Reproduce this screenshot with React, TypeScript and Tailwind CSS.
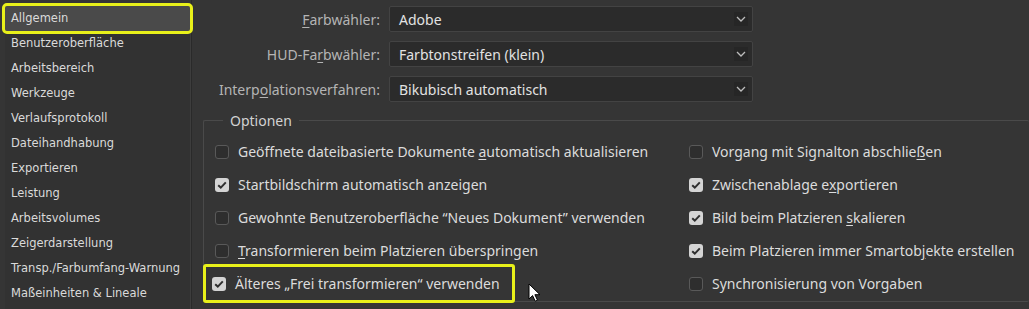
import { ReactNode } from 'react'

const navItems = [
  'Allgemein',
  'Benutzeroberfläche',
  'Arbeitsbereich',
  'Werkzeuge',
  'Verlaufsprotokoll',
  'Dateihandhabung',
  'Exportieren',
  'Leistung',
  'Arbeitsvolumes',
  'Zeigerdarstellung',
  'Transp./Farbumfang-Warnung',
  'Maßeinheiten & Lineale',
]

function U({ children }: { children: ReactNode }) {
  return <span className="underline underline-offset-2 decoration-1">{children}</span>
}

function Chevron() {
  return (
    <svg width="10" height="6" viewBox="0 0 10 6" className="text-[#bdbdbd]">
      <path d="M1 1l4 4 4-4" fill="none" stroke="currentColor" strokeWidth="1.3" />
    </svg>
  )
}

function SelectRow({ label, value }: { label: ReactNode; value: string }) {
  return (
    <div className="flex items-center h-[26px]">
      <div className="w-[197px] text-right pr-[9px] text-[14px] text-[#b4b4b4] whitespace-nowrap">{label}</div>
      <div className="w-[364px] h-[26px] flex items-center justify-between pl-[9px] pr-[4px] bg-[#2b2b2b] border border-[#434343] rounded-[2px] text-[14px] text-[#e2e2e2]">
        <span>{value}</span>
        <span className="w-[14px] h-[14px] flex items-center justify-center bg-[#262626]">
          <Chevron />
        </span>
      </div>
    </div>
  )
}

function Check({ checked, children }: { checked?: boolean; children: ReactNode }) {
  return (
    <div className="flex items-center h-[33px] gap-[9px] text-[14px] text-[#dcdcdc] whitespace-nowrap">
      {checked ? (
        <span className="w-[14px] h-[14px] rounded-[3px] bg-[#d4d4d4] flex items-center justify-center">
          <svg width="10" height="8" viewBox="0 0 10 8">
            <path d="M1.2 4.2l2.6 2.4L8.8 1.4" fill="none" stroke="#2f2f2f" strokeWidth="2" />
          </svg>
        </span>
      ) : (
        <span className="w-[14px] h-[14px] rounded-[3px] border border-[#595959] bg-[#2e2e2e]" />
      )}
      <span>{children}</span>
    </div>
  )
}

export default function App() {
  return (
    <div
      className="relative w-[1029px] h-[309px] bg-[#353535] flex overflow-hidden"
      style={{ fontFamily: '"Noto Sans", sans-serif' }}
    >
      {/* left nav */}
      <div className="w-[192px] h-full pl-[5px] pt-[6px] border-r border-[#2a2a2a]">
        <div className="h-full bg-[#323232] border-r border-[#3d3d3d]" style={{ fontFamily: '"DejaVu Sans", sans-serif' }}>
          {navItems.map((item, i) => (
            <div
              key={item}
              className={`h-[25px] flex items-center pl-[6px] text-[11.5px] text-[#dadada] ${i === 0 ? 'bg-[#4a4a4a] outline-[3px] outline-solid outline-[#e8f01a] rounded-[2px]' : ''}`}
            >
              {item}
            </div>
          ))}
        </div>
      </div>

      {/* main */}
      <div className="flex-1 pt-[6px]">
        <div className="flex flex-col gap-[9px]">
          <SelectRow label={<>
            <U>F</U>arbwähler:
          </>} value="Adobe" />
          <SelectRow label={<>
            HUD-Fa<U>r</U>bwähler:
          </>} value="Farbtonstreifen (klein)" />
          <SelectRow label={<>
            Interp<U>o</U>lationsverfahren:
          </>} value="Bikubisch automatisch" />
        </div>

        <fieldset className="ml-[11px] mt-[8px] h-[192px] border border-[#4a4a4a] border-r-0 rounded-[2px] pl-[11px]">
          <legend className="ml-[8px] px-[7px] text-[14px] text-[#d2d2d2]">Optionen</legend>
          <div className="grid grid-cols-[474px_1fr] mt-[4px]">
            <div className="flex flex-col">
              <Check>Geöffnete dateibasierte Dokumente <U>a</U>utomatisch aktualisieren</Check>
              <Check checked>Startbildschirm automatisch anzeigen</Check>
              <Check>Gewohnte Benutzeroberf<U>l</U>äche “Neues Dokument” verwenden</Check>
              <Check><U>T</U>ransformieren beim Platzieren überspringen</Check>
              <div className="-ml-[12px] -my-[3px] h-[39px] w-[312px] pl-[9px] flex items-center outline-[3px] outline-solid outline-[#e8f01a] -outline-offset-[3px] rounded-[3px]">
                <Check checked>Älteres „Frei transformieren“ verwenden</Check>
              </div>
            </div>
            <div className="flex flex-col">
              <Check>Vorgang mit Signalton abschlie<U>ß</U>en</Check>
              <Check checked>Zwischenablage e<U>x</U>portieren</Check>
              <Check checked>Bild beim Platzieren <U>s</U>kalieren</Check>
              <Check checked>Beim Platzieren immer Smartob<U>j</U>ekte erstellen</Check>
              <Check>Synchronisierung von Vorgaben</Check>
            </div>
          </div>
        </fieldset>
      </div>

      {/* mouse cursor */}
      <svg className="absolute left-[528px] top-[283px]" width="13" height="19" viewBox="0 0 13 19">
        <path d="M1 1v15l3.6-3.4 2.6 5.6 2.3-1-2.6-5.5H12z" fill="#fff" stroke="#000" strokeWidth="1" />
      </svg>
    </div>
  )
}
